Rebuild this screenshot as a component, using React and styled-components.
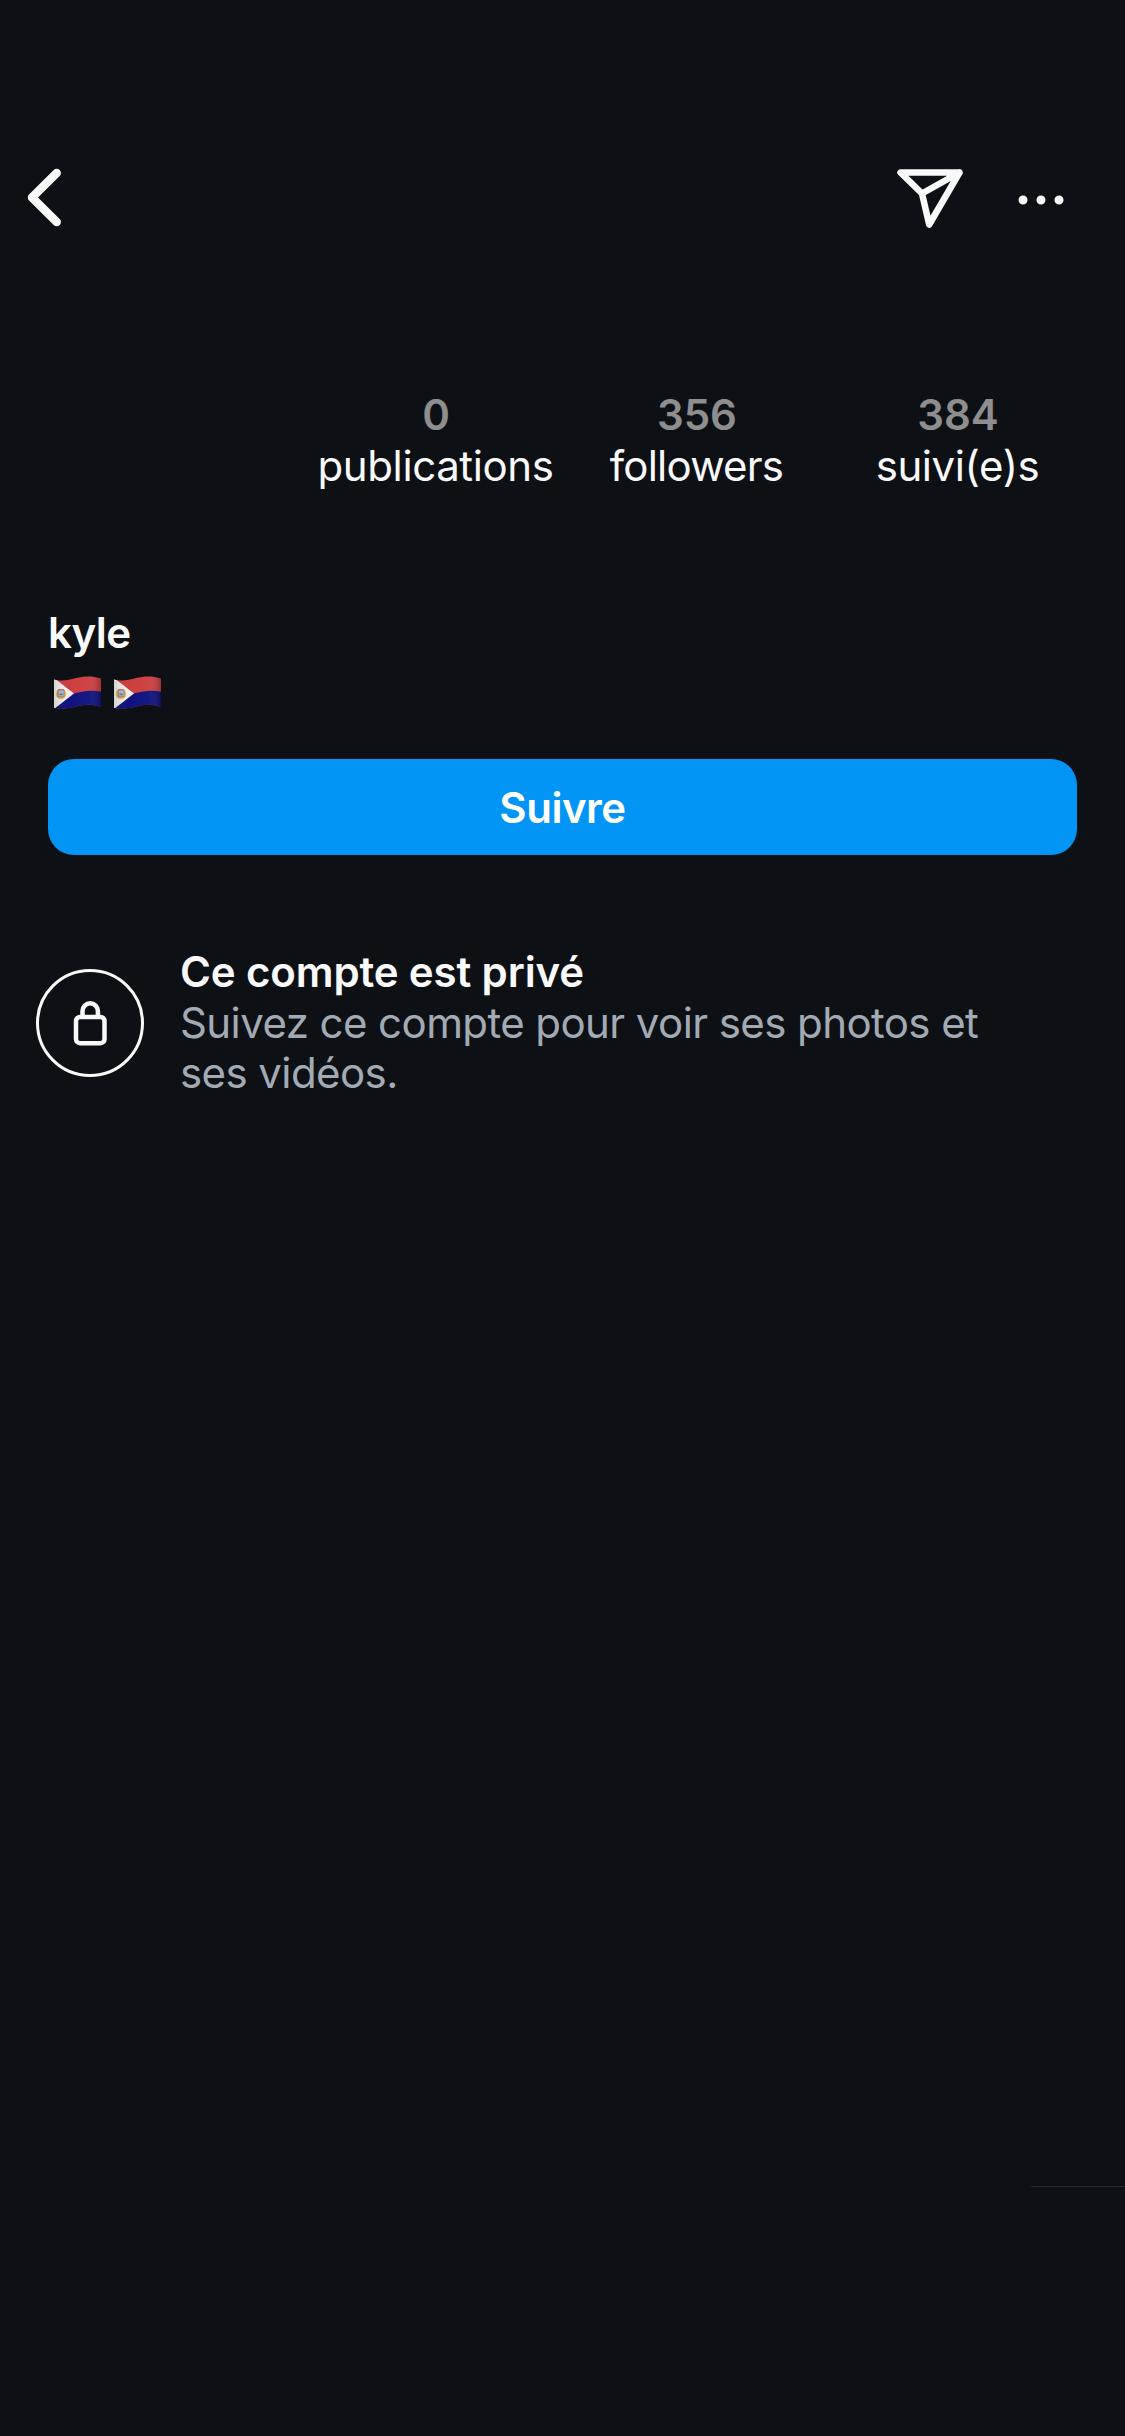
import React from "react";
import styled, { createGlobalStyle } from "styled-components";

const GlobalStyle = createGlobalStyle`
body {
margin: 0;
background: #0d1015;
}
`;

const Page = styled.div`
box-sizing: border-box;
width: 1125px;
height: 2436px;
padding-top: 153px;
display: flex;
flex-direction: column;
background: #0d1015;
color: #f9f9f9;
font-family: Inter, "Liberation Sans", sans-serif;
font-size: 42px;
overflow: hidden;
`;

const TopBar = styled.header`
display: flex;
align-items: center;
justify-content: space-between;
height: 90px;
padding: 0 54px 0 20px;
`;

const Actions = styled.div`
display: flex;
align-items: center;
gap: 39px;
`;

const IconButton = styled.button`
display: flex;
padding: 0;
border: 0;
background: none;
color: inherit;
`;

const Icon = styled.svg`
display: block;
fill: none;
stroke: currentColor;
stroke-linecap: round;
stroke-linejoin: round;
`;

const Stats = styled.section`
display: grid;
grid-template-columns: repeat(3, 261px);
margin: 147px 0 0 305px;
`;

const Stat = styled.div`
display: flex;
flex-direction: column;
align-items: center;
white-space: nowrap;
`;

const Count = styled.span`
padding: 0 0 2px 1px;
color: #8e8e8e;
font-weight: 600;
line-height: 49px;
`;

const Label = styled.span`
line-height: 50px;
letter-spacing: ${(props) => props.$spacing};
`;

const Bio = styled.section`
display: flex;
flex-direction: column;
margin: 117px 48px 0;
`;

const Name = styled.span`
font-weight: 600;
line-height: 50px;
letter-spacing: -0.6px;
`;

const Flags = styled.div`
display: flex;
gap: 12px;
height: 34px;
margin: 18px 0 0 6px;
`;

const FollowButton = styled.button`
display: flex;
align-items: center;
justify-content: center;
height: 96px;
margin: 49px 48px 0;
padding: 1px 0 0;
border: 0;
border-radius: 26px;
background: #0295f6;
color: #fff;
font: 600 42px/50px Inter, "Liberation Sans", sans-serif;
letter-spacing: -0.5px;
`;

const PrivateNotice = styled.section`
display: flex;
align-items: center;
gap: 36px;
margin: 92px 36px 0;
`;

const LockCircle = styled.div`
box-sizing: border-box;
display: flex;
align-items: center;
justify-content: center;
width: 108px;
height: 108px;
border: 3px solid #f9f9f9;
border-radius: 50%;
`;

const NoticeText = styled.div`
display: flex;
flex-direction: column;
white-space: nowrap;
`;

const NoticeTitle = styled.span`
padding-bottom: 2px;
font-weight: 600;
line-height: 49px;
letter-spacing: -0.14px;
`;

const NoticeBody = styled.span`
color: #a2aab4;
line-height: 50px;
letter-spacing: -0.58px;
`;

const BottomLine = styled.div`
width: 94px;
height: 1px;
margin: auto 0 249px auto;
background: #25292d;
`;

const Flag = ({ id }) => (
    <svg width="48" height="34" viewBox="0 0 48 34">
        <defs>
            <clipPath id={id}>
                <path d="M0 3.5C9 5.5 14 4 22 2C30 0 38 -.5 47 2.5V31C38 27.500 30 28.500 22 30.500C14 32.500 9 33.500 0 32Z" />
            </clipPath>
            <linearGradient id={id + "-shade"}>
                <stop offset="0" stopColor="#000" stopOpacity=".12" />
                <stop offset=".3" stopColor="#fff" stopOpacity=".02" />
                <stop offset=".7" stopColor="#fff" stopOpacity=".05" />
                <stop offset="1" stopColor="#000" stopOpacity=".25" />
            </linearGradient>
        </defs>
        <g clipPath={`url(#${id})`}>
            <path d="M0 0H48V34H0Z" fill="#cc3a3b" />
            <path d="M0 18C9 20 14 19 22 17C30 15 38 13.500 48 16V34H0Z" fill="#0a0c7c" />
            <path d="M0 2L20 17.500L0 33Z" fill="#f1efeb" />
            <circle cx="7" cy="18" r="5.300" fill="#d9c660" />
            <rect x="3.300" y="13" width="7.400" height="8.600" rx="2" fill="#cf6a60" />
            <rect x="4.600" y="14.500" width="5" height="5.800" rx="1" fill="#94c5df" />
            <path d="M5.500 17.500H8.700V19.300H5.500Z" fill="#61767e" />
            <path d="M0 0H48V34H0Z" fill={`url(#${id}-shade)`} />
        </g>
    </svg>
);

const stats = [
    { count: "0", label: "publications", spacing: "-0.4px" },
    { count: "356", label: "followers", spacing: "-0.75px" },
    { count: "384", label: "suivi(e)s", spacing: "-0.4px" },
];

const App = () => {
    return (
        <Page>
            <GlobalStyle />
            <TopBar>
                <IconButton aria-label="Retour">
                    <Icon width="48" height="72" viewBox="20 162 48 72" strokeWidth="8.5">
                        <path d="M56.700 173L32 197.500L56.700 222" />
                    </Icon>
                </IconButton>
                <Actions>
                    <IconButton aria-label="Envoyer">
                        <Icon width="80" height="72" viewBox="890 162 80 72" strokeWidth="6.500">
                            <path d="M900.500 172.500H959.500L929.200 224.500L922 193.500ZM922 193.500L959.500 172.500" />
                        </Icon>
                    </IconButton>
                    <IconButton aria-label="Options">
                        <Icon width="62" height="72" viewBox="1009 162 62 72" strokeWidth="9">
                            <path d="M1023 200h.01M1041 200h.01M1059 200h.01" />
                        </Icon>
                    </IconButton>
                </Actions>
            </TopBar>
            <Stats>
                {stats.map((stat) => (
                    <Stat key={stat.label}>
                        <Count>{stat.count}</Count>
                        <Label $spacing={stat.spacing}>{stat.label}</Label>
                    </Stat>
                ))}
            </Stats>
            <Bio>
                <Name>kyle</Name>
                <Flags>
                    <Flag id="flag-a" />
                    <Flag id="flag-b" />
                </Flags>
            </Bio>
            <FollowButton>Suivre</FollowButton>
            <PrivateNotice>
                <LockCircle>
                    <Icon width="40" height="52" viewBox="70 997 40 52" strokeWidth="4.500">
                        <rect x="76" y="1017" width="28.500" height="26.200" rx="4" />
                        <path d="M82.500 1016V1011a7.700 7.700 0 0 1 15.400 0V1016" />
                    </Icon>
                </LockCircle>
                <NoticeText>
                    <NoticeTitle>Ce compte est privé</NoticeTitle>
                    <NoticeBody>Suivez ce compte pour voir ses photos et</NoticeBody>
                    <NoticeBody>ses vidéos.</NoticeBody>
                </NoticeText>
            </PrivateNotice>
            <BottomLine />
        </Page>
    );
};

export default App;
